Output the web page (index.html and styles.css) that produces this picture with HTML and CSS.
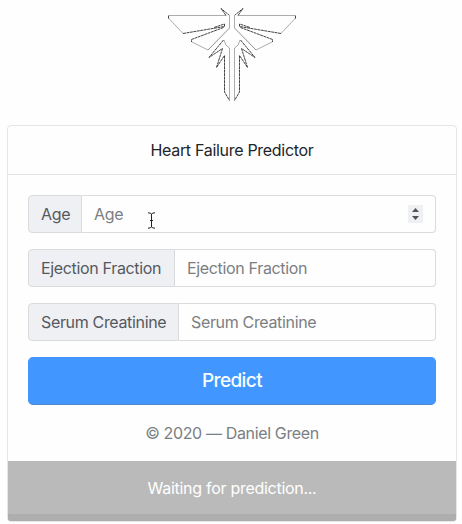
FILE: index.html
```html
<!DOCTYPE html>
<html lang="en">
<head>
<meta charset="utf-8">
<title>Heart Failure Predictor</title>
<link rel="stylesheet" href="styles.css">
</head>
<body>
<svg class="logo" width="132" height="96" viewBox="166 6 132 96" aria-hidden="true">
  <defs>
    <g id="half">
      <path class="faint" d="M169 15.500H226M183 33.500L168.500 18M208 50L192 42M229.500 15V28M229.500 48V100M224 40Q225 46 229.500 48"/>
      <path class="mid" d="M229.500 28L208 50"/>
      <path class="ink" d="M168.500 15.500V18.500M183 33.500L224.500 26.500V24L214 27.500M223.500 27.500L191.500 39.500V42M226 15.500L221 8.500L229 15M223.500 40L209 57.500L222.500 48.500L216.500 67.500L224.500 55.500V92L229.500 100.500"/>
    </g>
  </defs>
  <use href="#half"/>
  <use href="#half" transform="matrix(-1 0 0 1 464 0)"/>
</svg>
<main class="card">
  <h1 class="title"><span>Heart Failure Predictor</span></h1>
  <form class="form">
    <div class="group">
      <label class="label age">Age</label>
      <div class="field"><span>Age</span>
        <span class="stepper"><svg width="15" height="18" viewBox="0 0 15 18"><path d="M4 7L7.500 3L11 7ZM4 11H11L7.500 15Z"/></svg></span>
        <svg class="cursor" width="9" height="17" viewBox="0 0 9 17"><path d="M1 .8Q3.500 .8 4.500 2Q5.500 .8 8 .8M4.500 2V15M1 16.200Q3.500 16.200 4.500 15Q5.500 16.200 8 16.200M3 8.500H6"/></svg>
      </div>
    </div>
    <div class="group"><label class="label ejection">Ejection Fraction</label><div class="field"><span>Ejection Fraction</span></div></div>
    <div class="group"><label class="label serum">Serum Creatinine</label><div class="field"><span>Serum Creatinine</span></div></div>
    <button class="predict" type="button">Predict</button>
    <p class="copyright">© 2020 — Daniel Green</p>
  </form>
  <footer class="status">Waiting for prediction...</footer>
</main>
</body>
</html>
```
FILE: styles.css
```css
* { box-sizing: border-box; }
html { background: #fefefe; }
body {
  margin: 0;
  padding: 6px 5px 0 7px;
  height: 524px;
  overflow: hidden;
  font: 16px/24px Inter, "Liberation Sans", sans-serif;
  letter-spacing: -0.34px;
  color: #212529;
}
.logo { display: block; margin: 0 auto 23px 159px; fill: none; }
.ink { stroke: #222; stroke-width: .85; stroke-dasharray: 3 .5; }
.mid { stroke: #555; stroke-width: .65; }
.faint { stroke: #888; stroke-width: .7; }
.card {
  width: 450px;
  height: 397px;
  border: 1px solid #e5e6e7;
  border-radius: 4px;
  overflow: hidden;
}
.title {
  height: 49px;
  margin: 0;
  padding-top: 12px;
  border-bottom: 1px solid #e2e3e4;
  font-size: 16px;
  font-weight: 400;
  letter-spacing: -0.3px;
  text-align: center;
}
.form { padding: 20px 20px 0; height: 286px; }
.group { display: flex; height: 38px; margin-bottom: 16px; }
.label {
  flex: none;
  padding: 6px 12px;
  border: 1px solid #d9dbdd;
  border-radius: 4px 0 0 4px;
  background: #eff0f4;
  color: #55595e;
  white-space: nowrap;
}
.age { width: 54px; }
.ejection { width: 147px; }
.serum { width: 151px; }
.field {
  position: relative;
  display: flex;
  flex: 1;
  justify-content: space-between;
  padding: 6px 12px;
  border: 1px solid #d9dbdd;
  border-left: 0;
  border-radius: 0 4px 4px 0;
  color: #7b7e82;
}
.stepper { width: 15px; height: 18px; margin-top: 3px; background: #eff0f3; }
.stepper svg { display: block; fill: #505256; }
.cursor { position: absolute; left: 65px; top: 16px; fill: none; stroke: #222; }
.predict {
  display: block;
  width: 100%;
  height: 48px;
  padding: 0;
  border: 1px solid #4296ff;
  border-bottom-color: #5288cb;
  border-radius: 5px;
  background: #4296ff;
  color: #f5ffff;
  font: 500 19px/46px Inter, sans-serif;
  letter-spacing: -0.6px;
}
.copyright { margin: 16px 0 0; color: #7b7e82; letter-spacing: -0.36px; text-align: center; }
.status {
  height: 60px;
  padding-top: 15px;
  border-bottom: 7px solid #aeaeae;
  background: #bababa;
  color: #fff;
  letter-spacing: -0.28px;
  text-align: center;
}
```
